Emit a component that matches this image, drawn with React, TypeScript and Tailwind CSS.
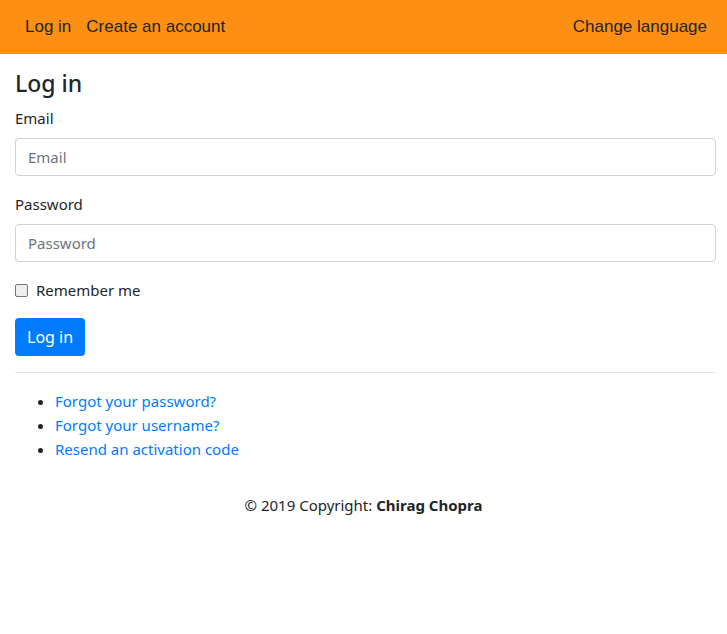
export default function App() {
  const body = { fontFamily: '"Noto Sans", "Open Sans", sans-serif' };
  return (
    <div className="min-h-[634px] bg-white text-[15px] text-[#212529]" style={body}>
      <nav
        className="flex h-[54px] items-center justify-between bg-[#fd9014] pl-[25px] pr-[20px] text-[17px] text-[#212529]"
        style={{ fontFamily: '"Liberation Sans", Arial, sans-serif' }}
      >
        <div className="flex gap-[15px]">
          <a>Log in</a>
          <a>Create an account</a>
        </div>
        <a>Change language</a>
      </nav>
      <main className="pl-[15px] pr-[11px] pt-[15px]">
        <h4 className="mb-[8px] text-[23px] font-medium leading-[29px]">Log in</h4>
        <form>
          <div className="mb-[16px]">
            <label className="mb-[8px] block leading-[24px]">Email</label>
            <input
              className="block h-[38px] w-full rounded-[4px] border border-[#ced4da] px-[12px] leading-[24px] placeholder:text-[#6c757d] outline-none"
              placeholder="Email"
            />
          </div>
          <div className="mb-[16px]">
            <label className="mb-[8px] block leading-[24px]">Password</label>
            <input
              type="password"
              className="block h-[38px] w-full rounded-[4px] border border-[#ced4da] px-[12px] leading-[24px] placeholder:text-[#6c757d] outline-none"
              placeholder="Password"
            />
          </div>
          <div className="mb-[16px] flex h-[24px] items-center">
            <span className="mr-[8px] box-border h-[13px] w-[13px] rounded-[2px] border border-[#767676] bg-[#efefef]" />
            <span className="leading-[24px]">Remember me</span>
          </div>
          <button
            type="button"
            className="h-[38px] rounded-[4px] bg-[#007bff] px-[12px] text-[16px] leading-[24px] text-white"
          >
            Log in
          </button>
        </form>
        <hr className="mb-[16px] mt-[16px] border-0 border-t border-[rgba(0,0,0,0.1)]" />
        <ul className="mb-[16px] list-disc pl-[40px] leading-[24px] marker:text-[#212529]">
          <li><a className="text-[#007bff]">Forgot your password?</a></li>
          <li><a className="text-[#007bff]">Forgot your username?</a></li>
          <li><a className="text-[#007bff]">Resend an activation code</a></li>
        </ul>
      </main>
      <footer className="py-[16px] text-center leading-[24px]">
        © 2019 Copyright: <b className="font-bold">Chirag Chopra</b>
      </footer>
    </div>
  );
}
